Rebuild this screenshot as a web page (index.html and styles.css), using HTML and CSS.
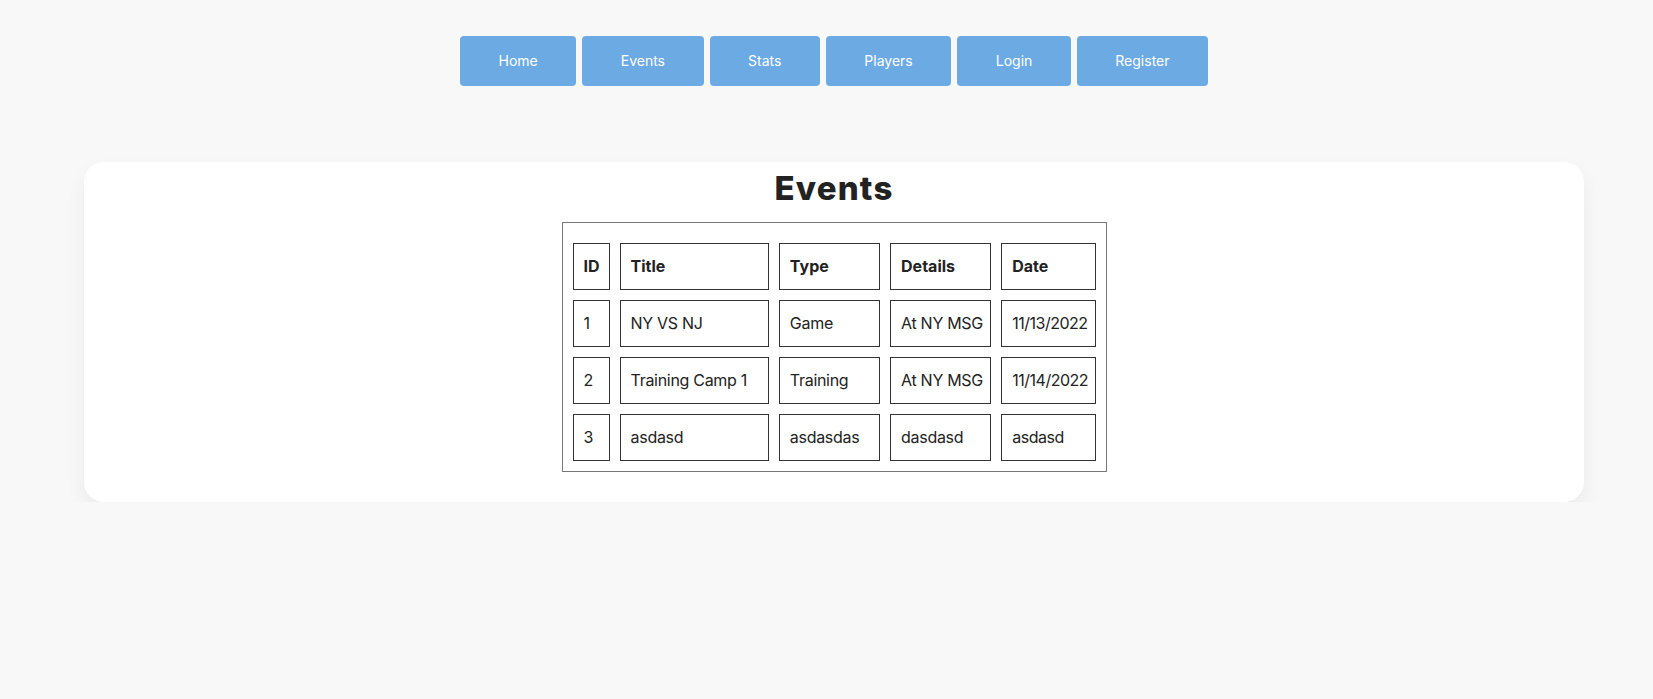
FILE: index.html
```html
<!DOCTYPE html>
<html lang="en">
<head>
<meta charset="utf-8">
<title>Events</title>
<link rel="stylesheet" href="styles.css">
</head>
<body>
<nav class="nav">
  <a class="nav-btn" href="#">Home</a>
  <a class="nav-btn" href="#">Events</a>
  <a class="nav-btn" href="#">Stats</a>
  <a class="nav-btn" href="#">Players</a>
  <a class="nav-btn" href="#">Login</a>
  <a class="nav-btn" href="#">Register</a>
</nav>
<main class="card">
  <h1 class="title">Events</h1>
  <table class="events">
    <thead>
      <tr>
        <th class="c-id">ID</th>
        <th class="c-title">Title</th>
        <th class="c-type">Type</th>
        <th class="c-details">Details</th>
        <th class="c-date">Date</th>
      </tr>
    </thead>
    <tbody>
      <tr><td>1</td><td>NY VS NJ</td><td>Game</td><td>At NY MSG</td><td>11/13/2022</td></tr>
      <tr><td>2</td><td>Training Camp 1</td><td>Training</td><td>At NY MSG</td><td>11/14/2022</td></tr>
      <tr><td>3</td><td>asdasd</td><td>asdasdas</td><td>dasdasd</td><td>asdasd</td></tr>
    </tbody>
  </table>
</main>
</body>
</html>
```
FILE: styles.css
```css
* { box-sizing: border-box; }

body {
  margin: 0;
  padding: 0 0 0 15px;
  background: #f8f8f8;
  font-family: Inter, "Open Sans", "Liberation Sans", sans-serif;
  color: #222;
}

.nav {
  display: flex;
  justify-content: center;
  gap: 6px;
  padding-top: 36px;
}

.nav-btn {
  display: block;
  height: 50px;
  line-height: 50px;
  padding: 0 38.5px;
  background: #6caae4;
  color: #fff;
  text-decoration: none;
  font-size: 14px;
  border-radius: 4px;
}

.card {
  width: 1500px;
  margin: 76px auto 0;
  background: #fff;
  border-radius: 20px;
  box-shadow: 0 10px 20px rgba(0, 0, 0, 0.06);
  padding: 6px 0 30px;
  display: flex;
  flex-direction: column;
  align-items: center;
}

.title {
  margin: 0 0 14px;
  font-size: 33px;
  line-height: 40px;
  font-weight: 800;
  letter-spacing: 1.2px;
  color: #222;
}

.events {
  width: 545px;
  border: 1px solid #777;
  border-spacing: 10px;
  padding-top: 10px;
  table-layout: fixed;
  font-size: 16px;
}

.events th,
.events td {
  border: 1px solid #333;
  padding: 10px;
  height: 47px;
  text-align: left;
  white-space: nowrap;
  overflow: visible;
  color: #222;
  line-height: 25px;
}

.events td { letter-spacing: -0.3px; }

.events th { font-weight: 700; }

.events td:last-child { letter-spacing: -0.5px; }

.c-id { width: 37px; }
.c-title { width: 149px; }
.c-type { width: 101px; }
.c-details { width: 101px; }
.c-date { width: 94px; }
```
